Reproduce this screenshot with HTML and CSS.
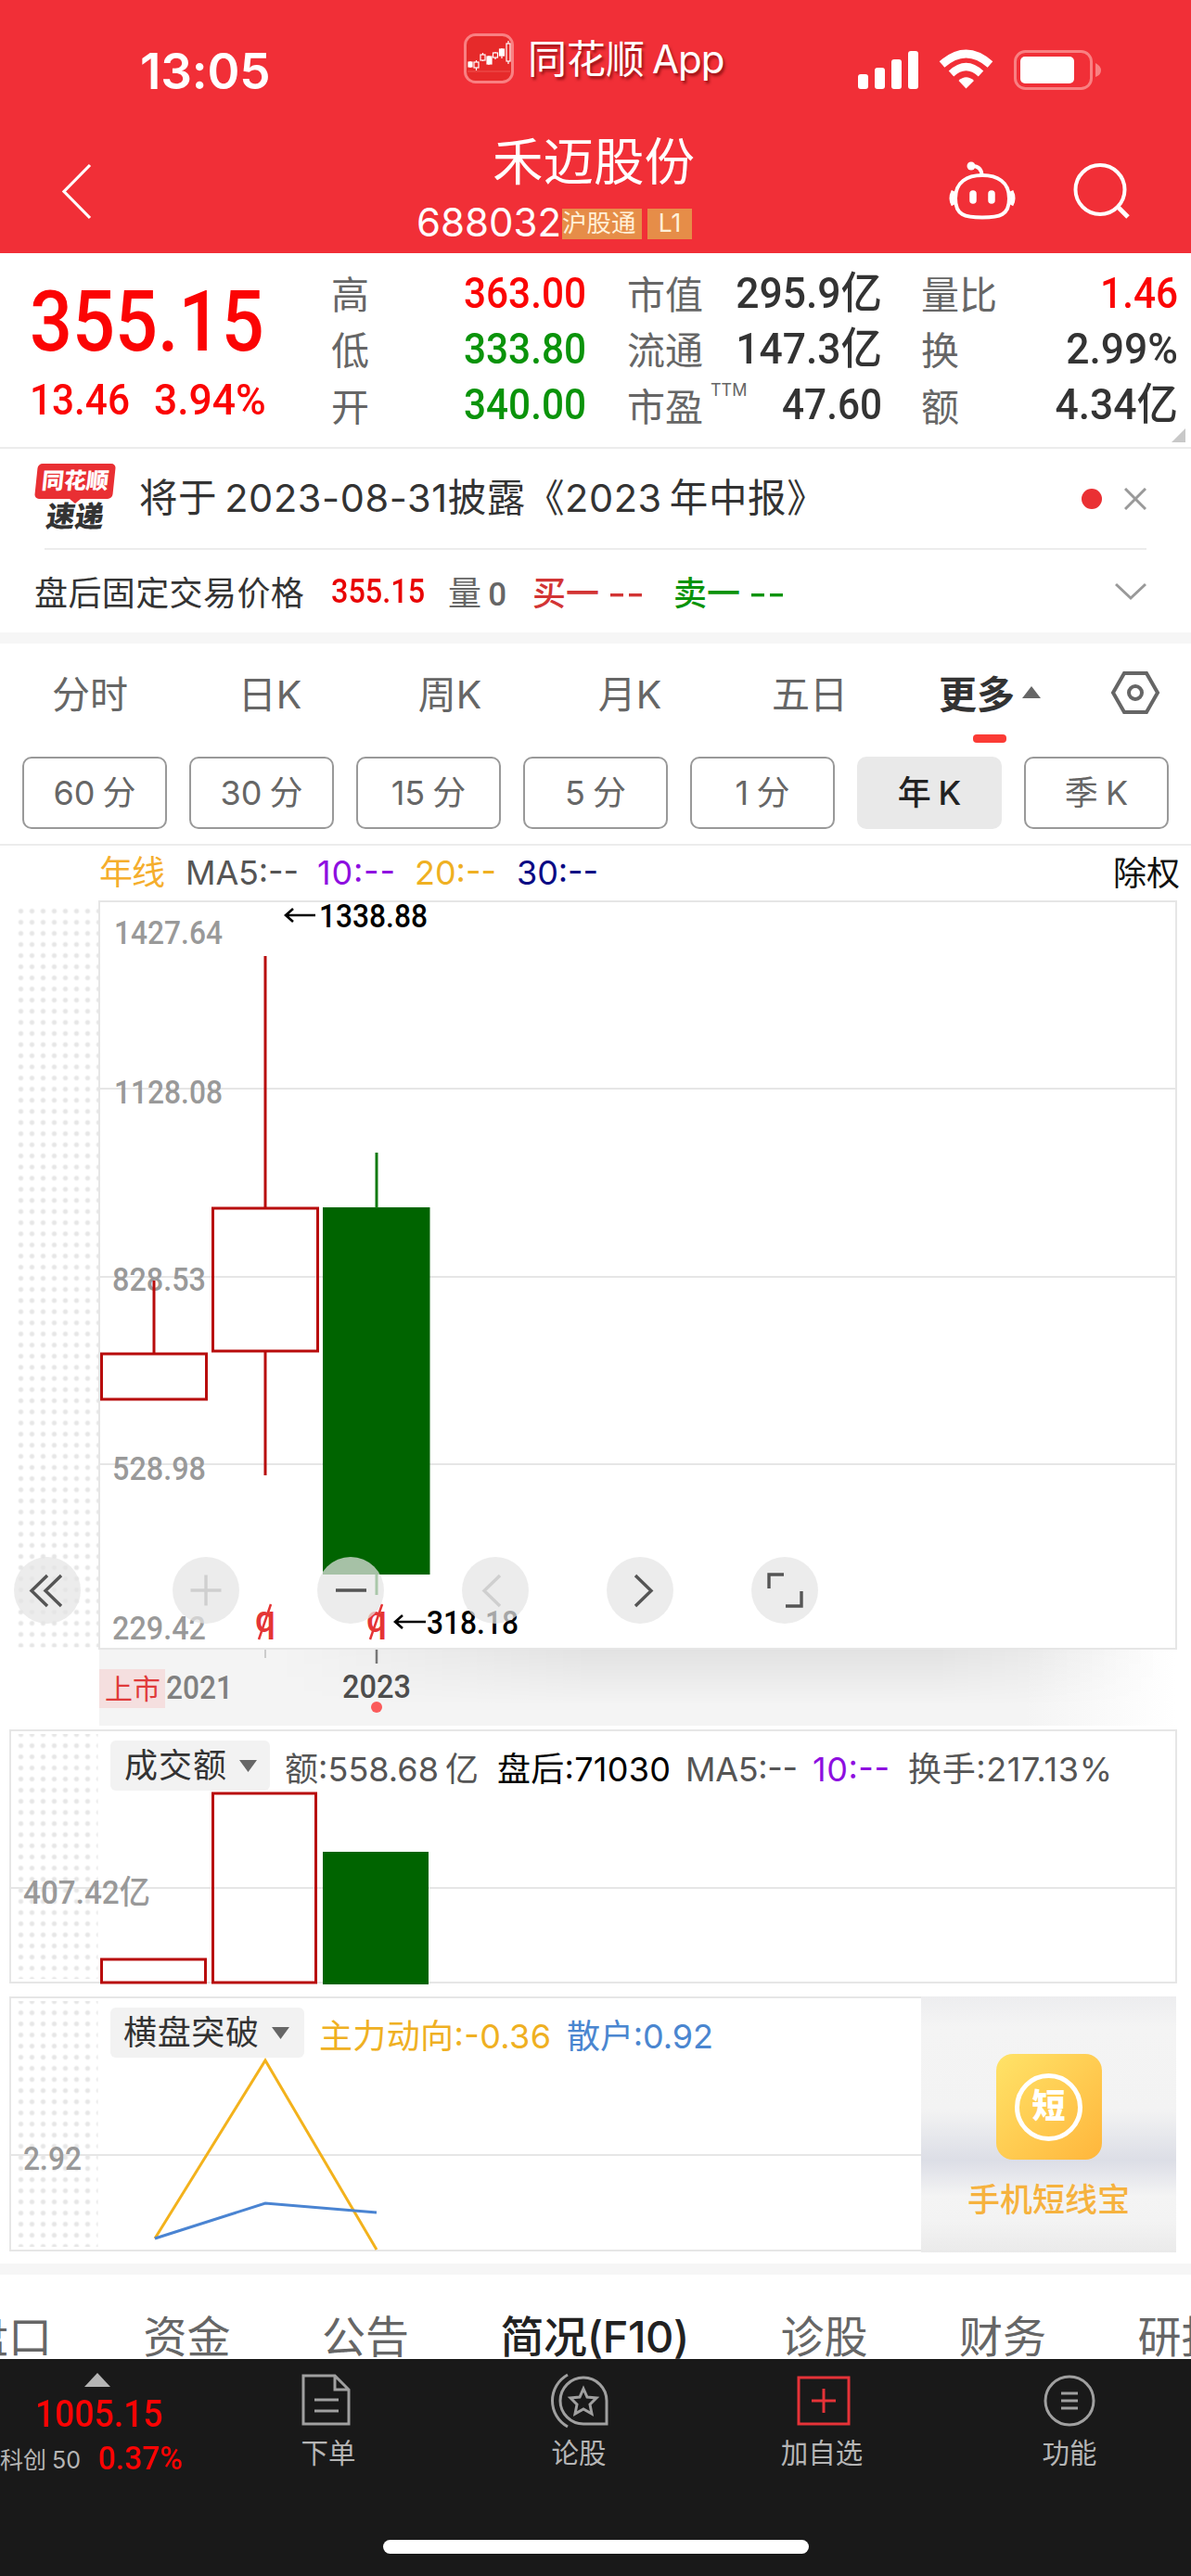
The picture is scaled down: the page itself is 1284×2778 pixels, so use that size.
FILE: index.html
```html
<!DOCTYPE html>
<html lang="zh-CN">
<head>
    <meta charset="UTF-8">
    <meta name="viewport" content="width=device-width, initial-scale=1.0">
    <title>禾迈股份 688032</title>
    <link rel="stylesheet" href="styles.css">
</head>
<body>
    <header class="header">
        <div class="status-bar">
            <div class="time">13:05</div>
            <div class="app-name">
                <svg class="app-icon" width="54" height="54" viewBox="0 0 54 54">
                    <rect x="1.5" y="1.5" width="51" height="51" rx="11" fill="#e62a2a" stroke="#f98082" stroke-width="3"/>
                    <path d="M4 41h46" stroke="#ee5550" stroke-width="1"/>
                    <g fill="none" stroke="#fff" stroke-width="1.2">
                        <path d="M7 30v7M13.500 29v11M20.500 21v9M27 24v10M34 20v8M41 16v11M48 8v25"/>
                        <rect x="5" y="31" width="4" height="5" fill="#fff"/>
                        <rect x="11" y="31" width="5" height="6" fill="#e62a2a"/>
                        <rect x="18" y="23" width="5" height="6" fill="#e62a2a"/>
                        <rect x="25" y="25" width="5" height="8" fill="#fff"/>
                        <rect x="31.500" y="21" width="5" height="5" fill="#e62a2a"/>
                        <rect x="38.500" y="17" width="5" height="7" fill="#fff"/>
                        <rect x="46" y="11" width="4" height="19" fill="#e62a2a"/>
                    </g>
                </svg>
                <span>同花顺<span class="sp">App</span></span>
            </div>
            <svg class="signals" width="264" height="44" viewBox="925 53 264 44" fill="#fff">
                <rect x="925" y="80" width="11" height="16" rx="3"/>
                <rect x="943" y="73" width="11" height="23" rx="3"/>
                <rect x="961" y="64" width="11" height="32" rx="3"/>
                <rect x="979" y="55" width="11" height="41" rx="3"/>
                <path d="M1041.500 95.500l-8-8.500q8-7.500 16.500 0z"/>
                <path d="M1025.500 79.500q16-15 32 0" fill="none" stroke="#fff" stroke-width="8"/>
                <path d="M1015.500 69.500q26-23 52 0" fill="none" stroke="#fff" stroke-width="8.500"/>
                <rect x="1094.500" y="55.500" width="82" height="40" rx="11" fill="none" stroke="#f98082" stroke-width="3"/>
                <rect x="1100" y="61" width="58" height="29" rx="5"/>
                <path d="M1181 68q6 3 6 8t-6 7z" fill="#f98082"/>
            </svg>
        </div>
        <div class="title-bar">
            <svg class="back" width="36" height="64" viewBox="0 0 36 64" fill="none" stroke="#fff" stroke-width="3.200">
                <path d="M32 4L4 32.500 32 61"/>
            </svg>
            <div class="title">
                <h1>禾迈股份</h1>
                <div class="code">
                    <span class="code-num">688032</span>
                    <span class="badge badge-hgt">沪股通</span>
                    <span class="badge badge-l1">L1</span>
                </div>
            </div>
            <svg class="tools" width="200" height="66" viewBox="1020 172 200 66" fill="none" stroke="#fff" stroke-width="4">
                <path d="M1059 189c16 0 29 7 29 25s-10 20.500-29 20.500-29-2.500-29-20.500 13-25 29-25z"/>
                <path d="M1028 206q-4 8 0 15M1090 206q4 8 0 15" stroke-width="5"/>
                <path d="M1049 209v7M1069 209v7" stroke-width="7.500" stroke-linecap="round"/>
                <path d="M1048 179q10 0 10.500 10"/>
                <circle cx="1047" cy="179" r="4.500" fill="#fff" stroke="none"/>
                <circle cx="1186" cy="204.500" r="26.500"/>
                <path d="M1205 223l11 11" stroke-width="5"/>
            </svg>
        </div>
    </header>

    <section class="quote">
        <div class="price">
            <div class="price-now num">355.15</div>
            <div class="price-change"><span class="num">13.46</span><span class="num wide">3.94%</span></div>
        </div>
        <dl class="stats">
            <dt>高</dt><dd class="num up">363.00</dd>
            <dt>市值</dt><dd class="num wide">295.9亿</dd>
            <dt>量比</dt><dd class="num up">1.46</dd>
            <dt>低</dt><dd class="num down">333.80</dd>
            <dt>流通</dt><dd class="num wide">147.3亿</dd>
            <dt>换</dt><dd class="num wide">2.99%</dd>
            <dt>开</dt><dd class="num down">340.00</dd>
            <dt>市盈<sup>TTM</sup></dt><dd class="num">47.60</dd>
            <dt>额</dt><dd class="num wide">4.34亿</dd>
        </dl>
        <i class="corner"></i>
    </section>

    <section class="news">
        <div class="news-logo">
            <span class="logo-top">同花顺</span>
            <i class="logo-tip"></i>
            <span class="logo-bottom">速递</span>
        </div>
        <p>将于<span class="sp">2023-08-31</span>披露《2023<span class="sp">年中报》</span></p>
        <i class="red-dot"></i>
        <svg width="24" height="24" viewBox="0 0 24 24" fill="none" stroke="#999" stroke-width="3"><path d="M1 1l22 22M23 1L1 23"/></svg>
    </section>

    <section class="after-hours">
        <span class="ah-title">盘后固定交易价格</span>
        <span class="ah-price num">355.15</span>
        <span class="ah-vol">量 <b>0</b></span>
        <span class="ah-buy">买一<b class="dash">--</b></span>
        <span class="ah-sell">卖一<b class="dash">--</b></span>
        <svg width="34" height="20" viewBox="0 0 34 20" fill="none" stroke="#999" stroke-width="3"><path d="M1 2l16 15L33 2"/></svg>
    </section>

    <nav class="tabs">
        <span>分时</span>
        <span>日K</span>
        <span>周K</span>
        <span>月K</span>
        <span>五日</span>
        <span class="active">更多<i class="tri-up"></i></span>
        <svg width="54" height="48" viewBox="0 0 54 48" fill="none" stroke="#666" stroke-width="4">
            <path d="M15 3h24l12 21-12 21H15L3 24z"/>
            <circle cx="27" cy="24" r="7"/>
        </svg>
    </nav>

    <nav class="periods">
        <span>60 分</span>
        <span>30 分</span>
        <span>15 分</span>
        <span>5 分</span>
        <span>1 分</span>
        <span class="active">年 K</span>
        <span>季 K</span>
    </nav>

    <!-- K line, coordinates are page pixels -->
    <svg class="chart" width="1284" height="951" viewBox="0 912 1284 951">
        <defs>
            <pattern id="dots" x="16.500" y="976.500" width="12" height="12" patternUnits="userSpaceOnUse">
                <circle cx="6" cy="6" r="2.600" fill="#e6e6e6"/>
            </pattern>
            <linearGradient id="axisFade" x1="0" x2="1" y1="0" y2="0">
                <stop offset="0" stop-color="#f4f4f4"/>
                <stop offset=".86" stop-color="#f4f4f4"/>
                <stop offset="1" stop-color="#fff"/>
            </linearGradient>
            <linearGradient id="axisShade" x1="0" x2="1" y1="0" y2="0">
                <stop offset="0" stop-color="#000" stop-opacity="0"/>
                <stop offset=".35" stop-color="#000" stop-opacity=".07"/>
                <stop offset=".75" stop-color="#000" stop-opacity=".07"/>
                <stop offset="1" stop-color="#000" stop-opacity="0"/>
            </linearGradient>
            <linearGradient id="maskFade" x1="0" x2="0" y1="0" y2="1">
                <stop offset="0" stop-color="#fff"/>
                <stop offset="1" stop-color="#000"/>
            </linearGradient>
            <mask id="shadeMask"><rect x="107" y="1779" width="1161" height="60" fill="url(#maskFade)"/></mask>
        </defs>

        <g class="legend">
            <text x="107" y="954" textLength="71" fill="#f5ae2d">年线</text>
            <text x="200" y="954" textLength="122" fill="#555">MA5:--</text>
            <text x="342" y="954" textLength="84" fill="#8e0fe0">10:--</text>
            <text x="447" y="954" textLength="88" fill="#efb022">20:--</text>
            <text x="557" y="954" textLength="88" fill="#0b0b84">30:--</text>
            <text x="1200" y="955" textLength="72" fill="#111">除权</text>
        </g>

        <rect x="16.500" y="976.500" width="91" height="800" fill="url(#dots)"/>
        <rect x="107" y="1779" width="1161" height="82" fill="url(#axisFade)"/>
        <rect x="300" y="1779" width="950" height="60" fill="url(#axisShade)" mask="url(#shadeMask)"/>
        <g fill="none" stroke="#e6e6e6" stroke-width="2">
            <rect x="107" y="972" width="1161" height="806"/>
            <path d="M107 1174h1161M107 1377h1161M107 1579h1161"/>
        </g>

        <g class="axis">
            <text x="123" y="1018" textLength="117" lengthAdjust="spacingAndGlyphs">1427.64</text>
            <text x="123" y="1190" textLength="117" lengthAdjust="spacingAndGlyphs">1128.08</text>
            <text x="121" y="1392" textLength="101" lengthAdjust="spacingAndGlyphs">828.53</text>
            <text x="121" y="1596" textLength="101" lengthAdjust="spacingAndGlyphs">528.98</text>
            <text x="121" y="1768" textLength="101" lengthAdjust="spacingAndGlyphs">229.42</text>
        </g>

        <g fill="none" stroke="#b80c0c" stroke-width="3">
            <path d="M166 1381v78M286 1031v271M286 1458v133"/>
            <rect x="109.500" y="1460" width="113" height="49"/>
            <rect x="229.500" y="1303" width="113" height="154" fill="#fff"/>
            <path d="M231 1377h110" stroke="#e6e6e6" stroke-width="2"/>
        </g>
        <rect x="348" y="1302" width="115.500" height="396" fill="#006400"/>
        <path d="M406 1243v60M406 1698v22" stroke="#127a12" stroke-width="3"/>

        <g class="peak">
            <path d="M340 987h-32M316 980l-8 7 8 7" fill="none" stroke="#000" stroke-width="2.600"/>
            <text x="344" y="1000" textLength="117" lengthAdjust="spacingAndGlyphs">1338.88</text>
            <path d="M459 1749h-33M434 1742l-8 7 8 7" fill="none" stroke="#000" stroke-width="2.600"/>
            <text x="460" y="1762" textLength="99" lengthAdjust="spacingAndGlyphs">318.18</text>
        </g>

        <!-- ex-rights marks -->
        <g class="mark">
            <text x="275" y="1760" textLength="22" lengthAdjust="spacingAndGlyphs">q</text>
            <text x="395" y="1760" textLength="22" lengthAdjust="spacingAndGlyphs">q</text>
            <path d="M279 1768l13-38M399 1768l13-38" stroke="#e53535" stroke-width="2.500"/>
        </g>

        <!-- floating controls -->
        <g fill="#e5e5e5" fill-opacity=".725">
            <circle cx="51" cy="1715" r="36"/>
            <circle cx="222" cy="1715" r="36"/>
            <circle cx="378" cy="1715" r="36"/>
            <circle cx="534" cy="1715" r="36"/>
            <circle cx="690" cy="1715" r="36"/>
            <circle cx="846" cy="1715" r="36"/>
        </g>
        <g fill="none" stroke="#555" stroke-width="3.400">
            <path d="M51 1699l-17 16.500 17 16.500M66 1699l-17 16.500 17 16.500"/>
            <path d="M362 1715h33"/>
            <path d="M685 1699l17 16.500-17 16.500"/>
            <path d="M829 1713v-15h16M864 1716v16h-17"/>
            <path d="M205.500 1715h33M222 1698.500v33M539 1699l-17 16.500 17 16.500" stroke="#cfcfcf"/>
        </g>

        <path d="M286 1779v9" stroke="#ccc" stroke-width="2"/>
        <path d="M406 1779v15" stroke="#777" stroke-width="2.500"/>
        <rect x="107" y="1800" width="71" height="42" fill="#f5dfdf"/>
        <text class="ipo" x="113" y="1832" textLength="60">上市</text>
        <g class="axis">
            <text x="179" y="1832" textLength="72" lengthAdjust="spacingAndGlyphs" class="c7">2021</text>
            <text x="369" y="1831" textLength="74" lengthAdjust="spacingAndGlyphs" class="c4">2023</text>
        </g>
        <circle cx="406" cy="1841" r="6" fill="#fb5b5b"/>
    </svg>

    <!-- turnover -->
    <svg class="chart" width="1284" height="284" viewBox="0 1863 1284 284">
        <rect x="16.500" y="1870" width="89" height="264" fill="url(#dots)"/>
        <path d="M11 1866h1257v272H11zM11 2036h1257" fill="none" stroke="#e6e6e6" stroke-width="2"/>
        <rect x="119" y="1877" width="172" height="54" rx="6" fill="#f2f2f2"/>
        <path d="M258 1898h19l-9.500 13z" fill="#666"/>
        <g class="legend">
            <text x="134" y="1917" textLength="110" fill="#333">成交额</text>
            <text x="307" y="1921" textLength="166" fill="#555">额:558.68</text>
            <text x="480" y="1921" fill="#555">亿</text>
            <text x="536" y="1921" textLength="187" fill="#000">盘后:71030</text>
            <text x="739" y="1921" textLength="121" fill="#555">MA5:--</text>
            <text x="876" y="1921" textLength="83" fill="#8e0fe0">10:--</text>
            <text x="979" y="1921" textLength="220" fill="#555">换手:217.13%</text>
        </g>
        <g fill="#fff" stroke="#b80c0c" stroke-width="3">
            <rect x="109.500" y="2113" width="112" height="25"/>
            <rect x="229.500" y="1934" width="111" height="204"/>
            <path d="M231 2036h108" stroke="#e6e6e6" stroke-width="2"/>
        </g>
        <rect x="348" y="1997" width="114" height="143" fill="#006400"/>
        <g class="axis"><text x="25" y="2053" textLength="137" lengthAdjust="spacingAndGlyphs">407.42亿</text></g>
    </svg>

    <!-- indicator -->
    <div class="indicator">
        <svg class="chart" width="993" height="282" viewBox="0 2147 993 282">
            <rect x="16.500" y="2158" width="89" height="265" fill="url(#dots)"/>
            <path d="M993 2154H11v273h982M11 2324h982" fill="none" stroke="#e6e6e6" stroke-width="2"/>
            <rect x="119" y="2165" width="209" height="54" rx="6" fill="#f2f2f2"/>
            <path d="M293 2186h19l-9.500 13z" fill="#666"/>
            <g class="legend">
                <text x="133" y="2205" textLength="146" fill="#333">横盘突破</text>
                <text x="344" y="2209" textLength="250" fill="#efb022">主力动向:-0.36</text>
                <text x="611" y="2209" textLength="158" fill="#4a86d0">散户:0.92</text>
            </g>
            <path d="M167 2414L286 2222l120 204" fill="none" stroke="#f3b21c" stroke-width="3"/>
            <path d="M167 2414l119-38 120 10" fill="none" stroke="#4a84d2" stroke-width="3"/>
            <g class="axis"><text x="25" y="2340" textLength="63" lengthAdjust="spacingAndGlyphs">2.92</text></g>
        </svg>
        <div class="promo">
            <div class="promo-icon"><span>短</span></div>
            <div class="promo-name">手机短线宝</div>
        </div>
    </div>

    <nav class="info-tabs">
        <span>盘口</span>
        <span>资金</span>
        <span>公告</span>
        <span class="active">简况(F10)</span>
        <span>诊股</span>
        <span>财务</span>
        <span>研报</span>
    </nav>

    <footer class="bottom-bar">
        <div class="index">
            <i class="tri-up"></i>
            <div class="index-value num">1005.15</div>
            <div class="index-row"><span>科创 50</span><span class="num wide index-pct">0.37%</span></div>
        </div>
        <div class="item item-order">
            <svg width="56" height="60" viewBox="0 0 56 60"><path d="M3 3h34l15 15v37H3zM37 3v15h15M15 29h26M15 41h26"/></svg>
            <span>下单</span>
        </div>
        <div class="item item-talk">
            <svg width="64" height="60" viewBox="0 0 64 60"><path d="M37 5a25 25 0 0 0 0 50h25V30a25 25 0 0 0-25-25zM20 2a32 32 0 0 0 0 56"/><path d="M37 17l4 9 10 1-7 7 2 10-9-5-9 5 2-10-7-7 10-1z"/></svg>
            <span>论股</span>
        </div>
        <div class="item item-add">
            <svg width="60" height="60" viewBox="0 0 60 60"><path d="M3 5h54v50H3zM30 17v26M17 30h26"/></svg>
            <span>加自选</span>
        </div>
        <div class="item item-menu">
            <svg width="60" height="60" viewBox="0 0 60 60"><circle cx="30" cy="30" r="26"/><path d="M21 22h18M21 30h18M21 38h18"/></svg>
            <span>功能</span>
        </div>
        <div class="home-indicator"></div>
    </footer>
</body>
</html>
```
FILE: styles.css
```css
* {
    box-sizing: border-box;
}
body {
    margin: 0;
    width: 1284px;
    height: 2778px;
    overflow: hidden;
    background: #fff;
    color: #333;
    font-family: Inter, "Noto Sans CJK SC", sans-serif;
    white-space: nowrap;
}
svg {
    display: block;
    flex: none;
}
i {
    display: block;
    flex: none;
}
b {
    font-weight: 500;
}
/* narrow digits */
.num {
    font-family: Roboto, "Noto Sans CJK SC", sans-serif;
    font-weight: 500;
    transform: scaleX(0.9);
    transform-origin: left;
}
.wide {
    transform: scaleX(0.945);
}
.up {
    color: #fb0404;
}
.down {
    color: #0a930a;
}
.sp {
    margin-left: 8px;
}

/* header */
.header {
    height: 273px;
    background: #f12f37;
    color: #fff;
}
.status-bar {
    display: flex;
    height: 130px;
    padding: 36px 0 0 151px;
}
.time {
    width: 349px;
    padding-top: 9px;
    font-size: 53px;
    line-height: 64px;
    font-weight: 600;
    letter-spacing: -0.2px;
}
.app-name {
    display: flex;
    gap: 15px;
    width: 425px;
    font-size: 42px;
    line-height: 55px;
    text-shadow: 2px 3px 3px rgba(90, 0, 0, 0.6);
}
.app-name .sp {
    letter-spacing: -1px;
}
.signals {
    margin-top: 17px;
}
.title-bar {
    display: flex;
    height: 143px;
}
.back {
    margin: 44px 0 0 65px;
}
.title {
    width: 919px;
}
.title h1 {
    margin: 10px 0 0 430px;
    font-size: 54.500px;
    line-height: 68px;
    font-weight: 400;
}
.code {
    display: flex;
    align-items: center;
    height: 40px;
    margin: 13px 0 0 348px;
}
.code-num {
    width: 157px;
    font-size: 42px;
    line-height: 40px;
    padding-bottom: 2px;
}
.badge {
    height: 33px;
    margin-right: 6px;
    background: #e68d48;
    font-size: 26.500px;
    line-height: 31px;
    text-align: center;
    color: #fff0d8;
}
.badge-hgt {
    width: 86px;
    text-align: left;
}
.badge-l1 {
    width: 48px;
}
.tools {
    margin-top: 42px;
}

/* quote */
.quote {
    position: relative;
    display: flex;
    height: 211px;
    border-bottom: 2px solid #ececec;
}
.price {
    width: 357px;
    padding: 25px 0 0 32px;
    color: #fb0404;
}
.price-now {
    font-size: 91px;
    line-height: 98px;
    transform: scaleX(0.89);
}
.price-change {
    display: flex;
    gap: 14px;
    font-size: 47px;
    line-height: 70px;
}
.stats {
    display: grid;
    grid-template-columns: 130px 145px 44px 130px 145px 42px 121px 156px;
    grid-auto-rows: 60px;
    margin: 13px 0 0;
    line-height: 60px;
}
.stats dt {
    color: #666;
    font-size: 41px;
    padding-top: 2px;
}
.stats dt:nth-of-type(3n + 2) {
    grid-column: 4;
}
.stats dt:nth-of-type(3n) {
    grid-column: 7;
}
.stats dt:nth-of-type(n + 7) {
    padding-top: 3px;
}
.stats dd {
    display: flex;
    justify-content: flex-end;
    margin: 0;
    font-size: 47px;
    transform-origin: right;
}
.stats sup {
    position: relative;
    top: -27px;
    margin-left: 8px;
    font-size: 18px;
    line-height: 0;
    vertical-align: baseline;
}
.corner {
    position: absolute;
    right: 6px;
    bottom: 5px;
    border-left: 15px solid transparent;
    border-bottom: 15px solid #c8c8c8;
}

/* news */
.news {
    display: flex;
    align-items: center;
    height: 109px;
    padding: 0 48px 2px 37px;
    position: relative;
}
.news::after {
    content: "";
    position: absolute;
    left: 48px;
    right: 48px;
    bottom: 0;
    height: 2px;
    background: #ececec;
}
.news-logo {
    display: flex;
    flex-direction: column;
    align-items: center;
    width: 87px;
    margin-right: 26px;
    font-weight: 900;
}
.logo-top {
    width: 84px;
    height: 38px;
    border-radius: 5px;
    background: #e92f33;
    color: #fff;
    font-size: 24px;
    line-height: 37px;
    text-align: center;
    transform: skewX(-6deg);
}
.logo-tip {
    margin-bottom: -5px;
    border: 6px solid transparent;
    border-top: 5px solid #e92f33;
    border-bottom: 0;
}
.logo-bottom {
    font-size: 31px;
    line-height: 37px;
    transform: skewX(-8deg);
}
.news p {
    flex: 1;
    margin: 0;
    font-size: 41.500px;
    line-height: 60px;
    letter-spacing: 0.600px;
    padding-bottom: 2px;
}
.red-dot {
    width: 22px;
    height: 22px;
    margin-right: 24px;
    border-radius: 50%;
    background: #ea3033;
}

/* after hours */
.after-hours {
    display: flex;
    align-items: center;
    height: 101px;
    padding: 0 48px 2px 37px;
    border-bottom: 12px solid #f6f6f6;
    font-size: 36px;
}
.after-hours svg {
    margin: 2px 0 0 auto;
}
.ah-title {
    width: 320px;
    letter-spacing: 0.4px;
}
.ah-price {
    width: 126px;
    padding-top: 2px;
    color: #e80505;
    font-size: 36px;
}
.ah-vol {
    width: 91px;
    color: #666;
}
.ah-vol b {
    margin-left: -3px;
    font-family: Roboto;
    font-size: 35px;
}
.ah-buy {
    width: 152px;
    color: #d23434;
    font-weight: 500;
}
.ah-sell {
    color: #0a930a;
    font-weight: 500;
}
.dash {
    display: inline-block;
    margin-left: 9px;
    transform: scaleX(1.2);
    transform-origin: left;
}

/* tabs */
.tabs {
    display: grid;
    grid-template-columns: repeat(6, 194px) 120px;
    align-items: center;
    justify-items: center;
    height: 108px;
    padding-bottom: 4px;
    color: #666;
    font-size: 41px;
}
.tabs .active {
    position: relative;
    display: flex;
    align-items: center;
    gap: 8px;
    color: #333;
    font-weight: 700;
}
.tabs svg {
    margin-top: 2px;
}
.tabs .active::after {
    content: "";
    position: absolute;
    left: 50%;
    bottom: -25px;
    width: 36px;
    height: 9px;
    margin-left: -18px;
    border-radius: 4px;
    background: #fb3b35;
}
.tri-up {
    border: 10px solid transparent;
    border-top: 0;
    border-bottom: 13px solid #666;
}
.periods {
    display: grid;
    grid-template-columns: repeat(7, 156px);
    gap: 24px;
    height: 110px;
    padding: 14px 24px 17px;
    border-bottom: 2px solid #ececec;
}
.periods span {
    border: 2px solid #999;
    border-radius: 10px;
    color: #666;
    font-size: 36px;
    line-height: 74px;
    text-align: center;
    word-spacing: -2px;
}
.periods .active {
    border-color: #e9e9e9;
    background: #e9e9e9;
    color: #222;
    font-weight: 500;
}

/* charts */
.legend {
    font-size: 36px;
}
.axis {
    font-family: Roboto, "Noto Sans CJK SC", sans-serif;
    font-weight: 500;
    font-size: 35px;
    fill: #999;
}
.axis .c7 {
    fill: #808080;
}
.axis .c4 {
    fill: #4d4d4d;
}
.peak {
    font-family: Roboto, sans-serif;
    font-weight: 500;
    font-size: 35px;
}
.mark {
    font-family: Roboto, sans-serif;
    font-weight: 500;
    font-size: 40px;
    fill: #e53535;
}
.ipo {
    font-size: 30px;
    fill: #e03a3a;
}
.indicator {
    display: flex;
    height: 306px;
    border-bottom: 12px solid #f6f6f6;
}
.promo {
    display: flex;
    flex-direction: column;
    align-items: center;
    width: 275px;
    height: 276px;
    margin-top: 6px;
    padding-top: 62px;
    background: linear-gradient(#ededef, #f4f4f4 12%, #f3f3f3 44%, #dcdee6 64%, #e6e7ec 70%, #f4f4f4 78%, #f3f3f3 88%, #eaeaea);
}
.promo-icon {
    display: flex;
    align-items: center;
    justify-content: center;
    width: 114px;
    height: 114px;
    border-radius: 18px;
    background: linear-gradient(135deg, #ffe368, #ffb63c);
}
.promo-icon span {
    width: 73px;
    height: 73px;
    border: 5px solid #fff;
    border-radius: 50%;
    color: #fff;
    font-size: 36px;
    font-weight: 900;
    line-height: 60px;
    text-align: center;
}
.promo-name {
    margin-top: 18px;
    color: #f6b23e;
    font-size: 35px;
    font-weight: 500;
    line-height: 50px;
}

/* bottom */
.info-tabs {
    display: flex;
    gap: 98.500px;
    height: 91px;
    margin-left: -38px;
    padding-top: 42px;
    overflow: hidden;
    color: #666;
    font-size: 47px;
    line-height: 49px;
}
.info-tabs .active {
    color: #222;
    font-weight: 500;
    letter-spacing: -0.400px;
}
.bottom-bar {
    position: relative;
    display: flex;
    height: 234px;
    background: #191919;
    color: #b5b5b5;
}
.index {
    width: 210px;
    padding-top: 15px;
}
.index .tri-up {
    width: 28px;
    margin-left: 91px;
    border-width: 0 14px 15px;
    border-bottom-color: #b5b5b5;
}
.index-value {
    margin: 4px 0 0 38px;
    color: #fb0404;
    font-size: 41.500px;
    line-height: 50px;
}
.index-row {
    display: flex;
    align-items: center;
    height: 46px;
    font-size: 25px;
}
.index-row span:first-child {
    width: 106px;
    word-spacing: -1px;
}
.index-pct {
    color: #fb0404;
    font-size: 35.500px;
}
.item {
    display: flex;
    flex-direction: column;
    align-items: center;
    width: 268px;
    padding-top: 15px;
    font-size: 29.500px;
    line-height: 40px;
}
.item-order {
    width: 288px;
}
.item-talk {
    width: 252px;
}
.item-add {
    width: 272px;
}
.item-menu {
    width: 262px;
}
.item-order svg {
    margin-left: -4px;
}
.item svg {
    margin-bottom: 6px;
    fill: none;
    stroke: #a0a0a0;
    stroke-width: 3;
}
.item-add svg {
    margin-left: 4px;
    stroke: #e63338;
}
.home-indicator {
    position: absolute;
    left: 413px;
    bottom: 24px;
    width: 459px;
    height: 15px;
    border-radius: 8px;
    background: #fff;
}
```
